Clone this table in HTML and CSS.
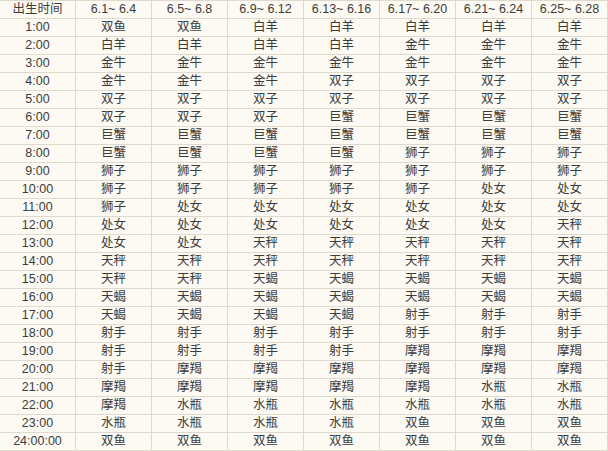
FILE: index.html
```html
<!DOCTYPE html>
<html lang="zh">
<head>
<meta charset="utf-8">
<title>出生时间星座表</title>
<link rel="stylesheet" href="styles.css">
</head>
<body>
<table class="zodiac">
<thead>
<tr><th>出生时间</th><th>6.1~ 6.4</th><th>6.5~ 6.8</th><th>6.9~ 6.12</th><th>6.13~ 6.16</th><th>6.17~ 6.20</th><th>6.21~ 6.24</th><th>6.25~ 6.28</th></tr>
</thead>
<tbody>
<tr><td>1:00</td><td>双鱼</td><td>双鱼</td><td>白羊</td><td>白羊</td><td>白羊</td><td>白羊</td><td>白羊</td></tr>
<tr><td>2:00</td><td>白羊</td><td>白羊</td><td>白羊</td><td>白羊</td><td>金牛</td><td>金牛</td><td>金牛</td></tr>
<tr><td>3:00</td><td>金牛</td><td>金牛</td><td>金牛</td><td>金牛</td><td>金牛</td><td>金牛</td><td>金牛</td></tr>
<tr><td>4:00</td><td>金牛</td><td>金牛</td><td>金牛</td><td>双子</td><td>双子</td><td>双子</td><td>双子</td></tr>
<tr><td>5:00</td><td>双子</td><td>双子</td><td>双子</td><td>双子</td><td>双子</td><td>双子</td><td>双子</td></tr>
<tr><td>6:00</td><td>双子</td><td>双子</td><td>双子</td><td>巨蟹</td><td>巨蟹</td><td>巨蟹</td><td>巨蟹</td></tr>
<tr><td>7:00</td><td>巨蟹</td><td>巨蟹</td><td>巨蟹</td><td>巨蟹</td><td>巨蟹</td><td>巨蟹</td><td>巨蟹</td></tr>
<tr><td>8:00</td><td>巨蟹</td><td>巨蟹</td><td>巨蟹</td><td>巨蟹</td><td>狮子</td><td>狮子</td><td>狮子</td></tr>
<tr><td>9:00</td><td>狮子</td><td>狮子</td><td>狮子</td><td>狮子</td><td>狮子</td><td>狮子</td><td>狮子</td></tr>
<tr><td>10:00</td><td>狮子</td><td>狮子</td><td>狮子</td><td>狮子</td><td>狮子</td><td>处女</td><td>处女</td></tr>
<tr><td>11:00</td><td>狮子</td><td>处女</td><td>处女</td><td>处女</td><td>处女</td><td>处女</td><td>处女</td></tr>
<tr><td>12:00</td><td>处女</td><td>处女</td><td>处女</td><td>处女</td><td>处女</td><td>处女</td><td>天秤</td></tr>
<tr><td>13:00</td><td>处女</td><td>处女</td><td>天秤</td><td>天秤</td><td>天秤</td><td>天秤</td><td>天秤</td></tr>
<tr><td>14:00</td><td>天秤</td><td>天秤</td><td>天秤</td><td>天秤</td><td>天秤</td><td>天秤</td><td>天秤</td></tr>
<tr><td>15:00</td><td>天秤</td><td>天秤</td><td>天蝎</td><td>天蝎</td><td>天蝎</td><td>天蝎</td><td>天蝎</td></tr>
<tr><td>16:00</td><td>天蝎</td><td>天蝎</td><td>天蝎</td><td>天蝎</td><td>天蝎</td><td>天蝎</td><td>天蝎</td></tr>
<tr><td>17:00</td><td>天蝎</td><td>天蝎</td><td>天蝎</td><td>天蝎</td><td>射手</td><td>射手</td><td>射手</td></tr>
<tr><td>18:00</td><td>射手</td><td>射手</td><td>射手</td><td>射手</td><td>射手</td><td>射手</td><td>射手</td></tr>
<tr><td>19:00</td><td>射手</td><td>射手</td><td>射手</td><td>射手</td><td>摩羯</td><td>摩羯</td><td>摩羯</td></tr>
<tr><td>20:00</td><td>射手</td><td>摩羯</td><td>摩羯</td><td>摩羯</td><td>摩羯</td><td>摩羯</td><td>摩羯</td></tr>
<tr><td>21:00</td><td>摩羯</td><td>摩羯</td><td>摩羯</td><td>摩羯</td><td>摩羯</td><td>水瓶</td><td>水瓶</td></tr>
<tr><td>22:00</td><td>摩羯</td><td>水瓶</td><td>水瓶</td><td>水瓶</td><td>水瓶</td><td>水瓶</td><td>水瓶</td></tr>
<tr><td>23:00</td><td>水瓶</td><td>水瓶</td><td>水瓶</td><td>水瓶</td><td>双鱼</td><td>双鱼</td><td>双鱼</td></tr>
<tr><td>24:00:00</td><td>双鱼</td><td>双鱼</td><td>双鱼</td><td>双鱼</td><td>双鱼</td><td>双鱼</td><td>双鱼</td></tr>
</tbody>
</table>
</body>
</html>
```
FILE: styles.css
```css
html, body {
  margin: 0;
  padding: 0;
  background: #fcfaf3;
}
.zodiac {
  width: 609px;
  margin-left: -1px;
  border-collapse: collapse;
  table-layout: fixed;
  font-family: "Liberation Sans", "Noto Sans CJK SC", sans-serif;
  font-size: 12.5px;
  color: #3c3c3c;
}
.zodiac th,
.zodiac td {
  height: 17px;
  padding: 0;
  border: 1px solid #dedad0;
  text-align: center;
  vertical-align: middle;
  font-weight: normal;
  line-height: 17px;
  white-space: nowrap;
}
```
